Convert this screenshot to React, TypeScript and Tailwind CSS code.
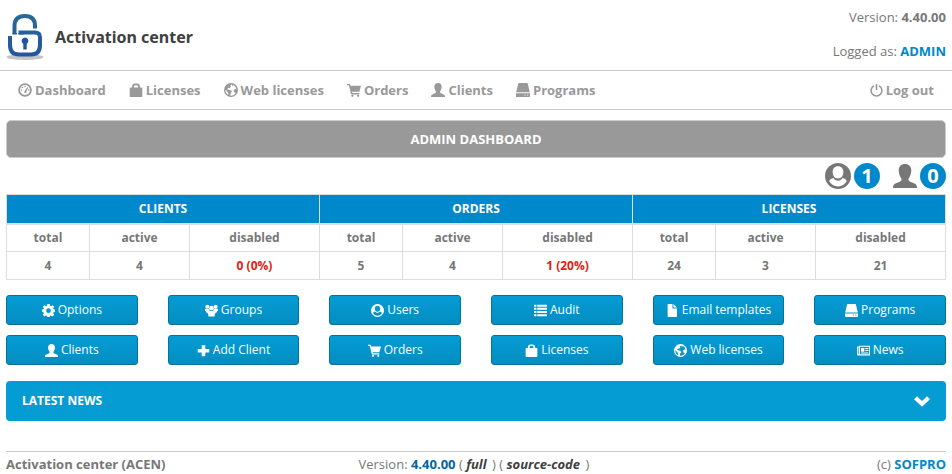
import type { ReactNode } from 'react';
import clsx from 'clsx';

type IconName =
  | 'dashboard'
  | 'lock'
  | 'globe'
  | 'cart'
  | 'person'
  | 'drive'
  | 'power'
  | 'cog'
  | 'group'
  | 'userCircle'
  | 'list'
  | 'file'
  | 'plus'
  | 'news'
  | 'chevron';

const icons: Record<IconName, ReactNode> = {
  dashboard: (
    <>
      <circle cx="8" cy="8" r="6.800" fill="none" stroke="currentColor" strokeWidth="2" />
      <path d="M7 10.200 10.600 4.600l.9.6L9.200 11a1.300 1.300 0 0 1-2.200-.8z" />
      <circle cx="3.900" cy="8" r=".9" />
      <circle cx="5.200" cy="5.200" r=".9" />
      <circle cx="8" cy="4" r=".9" />
      <circle cx="12.100" cy="8" r=".9" />
    </>
  ),
  lock: (
    <path
      fillRule="evenodd"
      d="M3.500 5V4a3.500 3.500 0 0 1 3.500-3.500h2A3.500 3.500 0 0 1 12.500 4v1h1.900a.8.8 0 0 1 .8.8V15a1 1 0 0 1-1 1H1.800a1 1 0 0 1-1-1V5.800a.8.8 0 0 1 .8-.8zm2.200 0h4.600V4a1.500 1.500 0 0 0-1.500-1.500H7.200A1.500 1.500 0 0 0 5.700 4z"
    />
  ),
  globe: (
    <path
      fillRule="evenodd"
      d="M8 0a8 8 0 1 1 0 16A8 8 0 0 1 8 0zm.6 1.700L6.900 3.200 8 4.300 6.200 5.900 4.800 5.500 3.700 7l1.500.6 2.600.8 1.300 1.700-1.500 1.700-.4 2.700h1.200a6.500 6.500 0 0 0 5-3.200l-1.800-.9-.6-2.100 1.600-1.500 1.500.3A6.500 6.500 0 0 0 11 2.400l-1.200 1zM1.700 7.400a6.500 6.500 0 0 0 3.200 6.400l-.1-2.700z"
    />
  ),
  cart: (
    <>
      <path d="M0 1h2.900a.7.7 0 0 1 .7.5L4 3h12l-1.700 6.300a.8.8 0 0 1-.8.7H5.700l.4 1.500H14V13H5.500a1 1 0 0 1-1-.7L2.200 2.500H0z" />
      <circle cx="6.200" cy="14.600" r="1.300" />
      <circle cx="12.700" cy="14.600" r="1.300" />
    </>
  ),
  person: (
    <path d="M8 0c2.600 0 4.200 1.700 4.200 4.200 0 1.300-.3 2.800-1 4.100-.5.900-.9 1.300-.9 2.100 0 .7.500 1.100 1.200 1.400l2.900 1.200c1.100.5 1.600 1.200 1.600 3H0c0-1.800.5-2.500 1.600-3l2.900-1.200c.7-.3 1.200-.7 1.200-1.400 0-.8-.4-1.200-.9-2.100-.7-1.300-1-2.800-1-4.100C3.800 1.700 5.400 0 8 0z" />
  ),
  drive: (
    <path
      fillRule="evenodd"
      d="M3.500 0h9a1 1 0 0 1 1 .8L15.800 10.500H.2L2.500.8a1 1 0 0 1 1-.8zM0 11.700h16V15a1 1 0 0 1-1 1H1a1 1 0 0 1-1-1zm9.500 1.600v1h1.500v-1zm3 0v1H14v-1z"
    />
  ),
  power: (
    <>
      <path d="M5 2.200a6.600 6.600 0 1 0 6 0" fill="none" stroke="currentColor" strokeWidth="1.900" />
      <path d="M7 0h2v7.500H7z" />
    </>
  ),
  cog: (
    <path
      fillRule="evenodd"
      d="M6.500 0h3l.4 2.300 1.200.5 1.900-1.400 2 2-1.300 1.900.5 1.200 1.700.3v3l-1.700.4-.5 1.200 1.300 1.900-2 2-1.900-1.300-1.200.5-.4 1.500h-3l-.4-1.500-1.200-.5L3 15.300l-2-2 1.300-1.900-.5-1.200L0 9.800v-3l1.800-.3.5-1.200L1 3.400l2-2 1.900 1.400 1.200-.5zM8 5.300a2.900 2.900 0 1 0 0 5.800 2.900 2.900 0 0 0 0-5.800z"
    />
  ),
  group: (
    <>
      <circle cx="2.900" cy="3.200" r="2.400" />
      <circle cx="13.100" cy="3.200" r="2.400" />
      <circle cx="8" cy="5.200" r="2.900" />
      <path d="M0 6.800C0 6 .8 5.600 1.600 5.600h3C4.800 7 5.400 7.800 6 8.300 4.500 8.500 3.600 9.400 3.400 11H2.200L1.200 9 0 8.500zM16 6.800c0-.8-.8-1.200-1.600-1.200h-3c-.2 1.400-.8 2.200-1.400 2.700 1.500.2 2.400 1.100 2.600 2.700h1.200l1-2 1.200-.5z" />
      <path d="M3 11.200c0-1.600 1-2.500 2.600-2.500h4.800c1.600 0 2.600.9 2.600 2.500l-1 1.300V14a1.500 1.500 0 0 1-1.500 1.500h-5A1.500 1.500 0 0 1 4 14v-1.500z" />
    </>
  ),
  userCircle: (
    <path
      fillRule="evenodd"
      d="M8 0a8 8 0 1 1 0 16A8 8 0 0 1 8 0zm0 2C5.800 2 4.700 3.500 4.700 5.600c0 2.300 1.300 4 3.300 4s3.300-1.700 3.300-4C11.300 3.500 10.200 2 8 2zM5.200 9.200C4 9.500 3 10 2.600 11.200c1.100 1.900 3.100 3.200 5.400 3.200s4.300-1.300 5.400-3.200c-.4-1.200-1.400-1.700-2.600-2C10.100 10.300 9.100 10.900 8 10.900S5.900 10.300 5.200 9.200z"
    />
  ),
  list: (
    <path d="M0 .8h3v2.500H0zM4 .8h12v2.500H4zM0 4.700h3v2.500H0zM4 4.700h12v2.500H4zM0 8.600h3v2.500H0zM4 8.600h12v2.500H4zM0 12.500h3V15H0zM4 12.500h12V15H4z" />
  ),
  file: <path d="M3 0h5v5.500h5.500V15a1 1 0 0 1-1 1H3a1 1 0 0 1-1-1V1a1 1 0 0 1 1-1zm6.200 0 4.300 4.300H9.200z" />,
  plus: <path d="M5.800 1.500h4.400v4.600h4.900v4.300h-4.900V15H5.800v-4.600H.9V6.100h4.900z" />,
  news: (
    <path
      fillRule="evenodd"
      d="M0 3h2.500V2H16v12H1.200A1.200 1.200 0 0 1 0 12.800zm1 1.200v8.300h1V4.200zm2.700-.9v9.400h11.100V3.300zM5 5h4v4.500H5zm5.200 0H14v1.200h-3.800zm0 2.400H14v1.200h-3.800zM5 10.600h9v1.200H5z"
    />
  ),
  chevron: <path d="M3 3.200 8 8l5-4.800L16 6.200 8 13.800 0 6.200z" />,
};

const Icon = ({ name, className = 'size-[13px]' }: { name: IconName; className?: string }) => (
  <svg viewBox="0 0 16 16" fill="currentColor" aria-hidden="true" className={clsx('shrink-0', className)}>
    {icons[name]}
  </svg>
);

const Logo = () => (
  <svg viewBox="0 0 38 48" className="h-12 w-[38px]" aria-hidden="true">
    <defs>
      <linearGradient id="logo-blue" x1="0" y1="0" x2="0" y2="48" gradientUnits="userSpaceOnUse">
        <stop offset="0" stopColor="#286a96" />
        <stop offset="1" stopColor="#2152a0" />
      </linearGradient>
    </defs>
    <ellipse cx="19" cy="44" rx="18.500" ry="3" fill="#c4c4c4" />
    <path d="M4 22V35q0 8 8 8h14q8 0 8-8V20H12V17H8z" fill="#fff" />
    <g fill="none" stroke="url(#logo-blue)" strokeWidth="4">
      <path d="M8.500 21V13Q8.500 3 19 3Q29 3 29 13V15.500" />
      <path d="M12.500 19.500H29Q34 19.500 34 24.500V32Q34 41.500 25 41.500H13Q4 41.500 4 32V23" />
    </g>
    <path d="M6.500 20.800H11M12.500 20.800H18" fill="none" stroke="url(#logo-blue)" strokeWidth="1.500" />
    <path d="M19 24.500a3.500 3.500 0 0 1 1.700 6.500V36.500h-3.400V31a3.500 3.500 0 0 1 1.700-6.500z" fill="#2152a0" />
  </svg>
);

const navItems: { label: string; icon: IconName }[] = [
  { label: 'Dashboard', icon: 'dashboard' },
  { label: 'Licenses', icon: 'lock' },
  { label: 'Web licenses', icon: 'globe' },
  { label: 'Orders', icon: 'cart' },
  { label: 'Clients', icon: 'person' },
  { label: 'Programs', icon: 'drive' },
];

const stats = [
  { title: 'CLIENTS', total: '4', active: '4', disabled: '0 (0%)', alert: true },
  { title: 'ORDERS', total: '5', active: '4', disabled: '1 (20%)', alert: true },
  { title: 'LICENSES', total: '24', active: '3', disabled: '21', alert: false },
];

const actions: { label: string; icon: IconName }[] = [
  { label: 'Options', icon: 'cog' },
  { label: 'Groups', icon: 'group' },
  { label: 'Users', icon: 'userCircle' },
  { label: 'Audit', icon: 'list' },
  { label: 'Email templates', icon: 'file' },
  { label: 'Programs', icon: 'drive' },
  { label: 'Clients', icon: 'person' },
  { label: 'Add Client', icon: 'plus' },
  { label: 'Orders', icon: 'cart' },
  { label: 'Licenses', icon: 'lock' },
  { label: 'Web licenses', icon: 'globe' },
  { label: 'News', icon: 'news' },
];

const OnlineCount = ({ icon, count }: { icon: IconName; count: number }) => (
  <div className="flex items-center gap-[3px]">
    <Icon name={icon} className={icon === 'person' ? 'size-6' : 'size-[26px]'} />
    <span className="flex size-[26px] items-center justify-center rounded-full bg-[#0088cc] text-xl font-bold text-white">
      {count}
    </span>
  </div>
);

const cell = 'h-7 border border-[#dddddd] p-0 text-center font-bold';

const StatsTable = () => (
  <table className="w-full table-fixed border-collapse text-xs">
    <colgroup>
      {stats.flatMap((s) => [
        <col key={`${s.title}-total`} className="w-[83px]" />,
        <col key={`${s.title}-active`} className="w-[100px]" />,
        <col key={`${s.title}-disabled`} className="w-[130px]" />,
      ])}
    </colgroup>
    <thead>
      <tr>
        {stats.map((s) => (
          <th key={s.title} colSpan={3} className="h-[29px] border border-b-2 border-[#dddddd] bg-[#0088cc] p-0 text-center font-bold text-white">
            {s.title}
          </th>
        ))}
      </tr>
      <tr>
        {stats.flatMap((s) =>
          ['total', 'active', 'disabled'].map((label) => (
            <th key={`${s.title}-${label}`} className={cell}>
              {label}
            </th>
          ))
        )}
      </tr>
    </thead>
    <tbody>
      <tr>
        {stats.flatMap((s) => [
          <td key={`${s.title}-total`} className={cell}>{s.total}</td>,
          <td key={`${s.title}-active`} className={cell}>{s.active}</td>,
          <td key={`${s.title}-disabled`} className={clsx(cell, s.alert && 'text-[#dd2211]')}>{s.disabled}</td>,
        ])}
      </tr>
    </tbody>
  </table>
);

const App = () => (
  <div className="bg-white font-['Open_Sans',sans-serif] text-[13px] leading-5 text-[#777777]">
    <header className="flex h-[70px] items-center justify-between px-1.5">
      <div className="flex items-center gap-[11px] pt-1">
        <Logo />
        <h1 className="font-['Noto_Sans',sans-serif] text-base font-bold text-[#404040]">Activation center</h1>
      </div>
      <div className="flex flex-col gap-3.5 pb-0.5 text-right">
        <p>
          Version: <strong>4.40.00</strong>
        </p>
        <p>
          Logged as: <a href="#admin" className="font-bold text-[#0088cc]">ADMIN</a>
        </p>
      </div>
    </header>

    <nav className="flex h-10 items-center justify-between border-y border-[#cccccc] px-[18px] font-bold text-[#999999]">
      <ul className="flex gap-[23px]">
        {navItems.map((item) => (
          <li key={item.label}>
            <a href="#nav" className="flex items-center gap-[3px]">
              <Icon name={item.icon} className="size-3.5" />
              {item.label}
            </a>
          </li>
        ))}
      </ul>
      <a href="#logout" className="flex items-center gap-[3px]">
        <Icon name="power" />
        Log out
      </a>
    </nav>

    <main className="px-1.5 pt-2.5">
      <h2 className="rounded-[5px] border border-[#cccccc] bg-[#999999] py-2 text-center text-[13px] font-bold text-white">
        ADMIN DASHBOARD
      </h2>
      <div className="flex h-9 items-center justify-end gap-[13px]">
        <OnlineCount icon="userCircle" count={1} />
        <OnlineCount icon="person" count={0} />
      </div>
      <StatsTable />

      <div className="mt-[15px] grid grid-cols-6 gap-x-[30px] gap-y-2.5">
        {actions.map((action) => (
          <button
            key={action.label}
            type="button"
            className="flex h-[30px] items-center justify-center gap-[3px] rounded-[3px] border border-[#057399] bg-linear-to-b from-[#049cd5] to-[#048dc0] text-xs whitespace-nowrap text-white"
          >
            <Icon name={action.icon} />
            {action.label}
          </button>
        ))}
      </div>

      <button
        type="button"
        className="mt-4 flex h-10 w-full items-center justify-between rounded bg-[#049cd2] px-4 text-xs font-bold text-white"
      >
        LATEST NEWS
        <Icon name="chevron" className="size-4" />
      </button>

      <footer className="mt-[30px] grid grid-cols-[3fr_2fr_3fr] border-t border-[#cccccc] pt-0.5 whitespace-nowrap">
        <strong>Activation center (ACEN)</strong>
        <p>
          Version: <a href="#version" className="font-bold text-[#0066a0]">4.40.00</a> ({' '}
          <a href="#full" className="pr-0.5 font-bold text-[#404040] italic">full</a> ) ({' '}
          <a href="#source" className="pr-0.5 font-bold text-[#404040] italic">source-code</a> )
        </p>
        <p className="text-right">
          (c) <a href="#sofpro" className="font-bold text-[#0088cc]">SOFPRO</a>
        </p>
      </footer>
    </main>
  </div>
);

export default App;
